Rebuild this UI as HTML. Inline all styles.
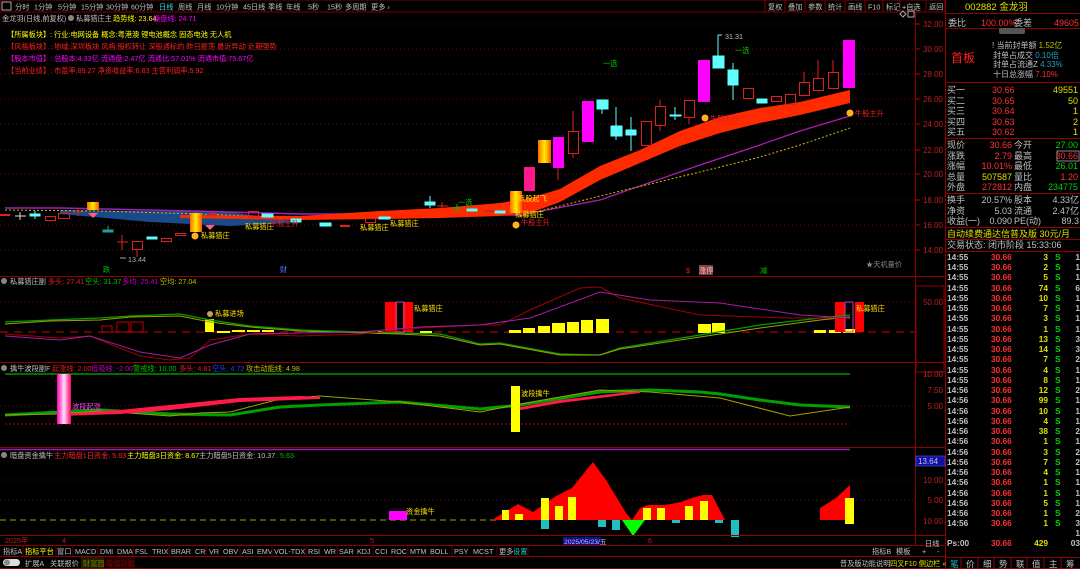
<!DOCTYPE html>
<html><head><meta charset="utf-8"><style>
html,body{margin:0;padding:0;background:#000;width:1080px;height:569px;overflow:hidden}
svg{display:block}
text{font-family:"Liberation Sans","Noto Sans CJK SC",sans-serif;font-size:7.2px}
.r9{font-size:9px}
.t8{font-size:8.3px}
</style></head><body>
<svg width="1080" height="569" viewBox="0 0 1080 569" xmlns="http://www.w3.org/2000/svg">
<defs>
<linearGradient id="og" x1="0" x2="1"><stop offset="0" stop-color="#ff6a00"/><stop offset=".5" stop-color="#ffee00"/><stop offset="1" stop-color="#ff5000"/></linearGradient>
<linearGradient id="pg" x1="0" x2="1"><stop offset="0" stop-color="#ff00aa"/><stop offset=".5" stop-color="#ffe0ff"/><stop offset="1" stop-color="#ff0066"/></linearGradient>
</defs>
<rect width="1080" height="569" fill="#000"/>
<!-- top toolbar -->
<rect x="0" y="0" width="945" height="12" fill="#000" stroke="#800000" stroke-width="1"/>
<rect x="2" y="2" width="9" height="8" fill="none" stroke="#aaa"/>
<g fill="#c0c0c0">
<text x="15" y="9.5">分时</text><text x="34" y="9.5">1分钟</text><text x="58" y="9.5">5分钟</text><text x="81" y="9.5">15分钟</text><text x="106" y="9.5">30分钟</text><text x="131" y="9.5">60分钟</text><text x="159" y="9.5" fill="#39d7d7">日线</text><text x="178" y="9.5">周线</text><text x="197" y="9.5">月线</text><text x="216" y="9.5">10分钟</text><text x="243" y="9.5">45日线</text><text x="268" y="9.5">季线</text><text x="286" y="9.5">年线</text><text x="308" y="9.5">5秒</text><text x="327" y="9.5">15秒</text><text x="345" y="9.5">多周期</text><text x="371" y="9.5">更多 ›</text>
<text x="768" y="9.5">复权</text><text x="788" y="9.5">叠加</text><text x="808" y="9.5">参数</text><text x="828" y="9.5">统计</text><text x="848" y="9.5">画线</text><text x="868" y="9.5">F10</text><text x="886" y="9.5">标记</text><text x="902" y="9.5">+自选</text><text x="929" y="9.5">返回</text>
</g>
<g stroke="#800000"><line x1="765" y1="0" x2="765" y2="12"/><line x1="785" y1="0" x2="785" y2="12"/><line x1="805" y1="0" x2="805" y2="12"/><line x1="825" y1="0" x2="825" y2="12"/><line x1="845" y1="0" x2="845" y2="12"/><line x1="865" y1="0" x2="865" y2="12"/><line x1="883" y1="0" x2="883" y2="12"/><line x1="900" y1="0" x2="900" y2="12"/><line x1="926" y1="0" x2="926" y2="12"/></g>
<!-- title -->
<text x="2" y="21" fill="#c0c0c0">金龙羽(日线,前复权)</text>
<circle cx="71" cy="18" r="3" fill="#888"/>
<text x="76" y="21" fill="#c0c0c0">私募猎庄主</text>
<text x="113" y="21" fill="#ffff00">趋势线: 23.64</text>
<text x="153" y="21" fill="#ff00ff">操盘线: 24.71</text>
<text x="7" y="37" fill="#ffff00">【所属板块】: 行业:电网设备 概念:粤港澳 锂电池概念 固态电池 无人机</text>
<text x="7" y="49" fill="#ff2020">【风格板块】: 地域:深圳板块 风格:股权转让 深股通标的 昨日振荡 最近异动 近期强势</text>
<text x="7" y="61" fill="#ff00ff">【股本市值】: 总股本:4.33亿 流通盘:2.47亿 流通比:57.01% 流通市值:75.67亿</text>
<text x="7" y="73" fill="#ff2020">【当前业绩】: 市盈率:89.27 净资收益率:6.83 主营利润率:5.92</text>
<!-- grid main -->
<g stroke="#7a0000" stroke-dasharray="1,3">
<line x1="0" y1="24" x2="915" y2="24"/><line x1="0" y1="49" x2="915" y2="49"/><line x1="0" y1="74" x2="915" y2="74"/><line x1="0" y1="99" x2="915" y2="99"/><line x1="0" y1="124" x2="915" y2="124"/><line x1="0" y1="150" x2="915" y2="150"/><line x1="0" y1="174" x2="915" y2="174"/><line x1="0" y1="200" x2="915" y2="200"/><line x1="0" y1="225" x2="915" y2="225"/><line x1="0" y1="250" x2="915" y2="250"/>
</g>
<!-- axis -->
<line x1="915.5" y1="12" x2="915.5" y2="545" stroke="#900000"/>
<line x1="945.5" y1="0" x2="945.5" y2="569" stroke="#900000"/>
<g fill="#c02020" text-anchor="end">
<text x="943" y="27" style="font-size:8px">32.00</text><text x="943" y="52" style="font-size:8px">30.00</text><text x="943" y="77" style="font-size:8px">28.00</text><text x="943" y="102" style="font-size:8px">26.00</text><text x="943" y="127" style="font-size:8px">24.00</text><text x="943" y="153" style="font-size:8px">22.00</text><text x="943" y="177" style="font-size:8px">20.00</text><text x="943" y="203" style="font-size:8px">18.00</text><text x="943" y="228" style="font-size:8px">16.00</text><text x="943" y="253" style="font-size:8px">14.00</text>
</g>
<g stroke="#c00000"><line x1="916" y1="24" x2="920" y2="24"/><line x1="916" y1="49" x2="920" y2="49"/><line x1="916" y1="74" x2="920" y2="74"/><line x1="916" y1="99" x2="920" y2="99"/><line x1="916" y1="124" x2="920" y2="124"/><line x1="916" y1="150" x2="920" y2="150"/><line x1="916" y1="174" x2="920" y2="174"/><line x1="916" y1="200" x2="920" y2="200"/><line x1="916" y1="225" x2="920" y2="225"/><line x1="916" y1="250" x2="920" y2="250"/></g>
<path d="M903 11 l3 3 -3 3 -3 -3z" fill="none" stroke="#aaa"/><rect x="908" y="11" width="6" height="6" fill="none" stroke="#aaa"/>
<!-- ribbons -->
<path d="M60 210 L230 212 L300 222 L230 226 L150 222 L60 214Z" fill="#1a4a8a"/>
<polyline points="5,208 60,208 150,210 230,212 300,214 380,214 440,215 520,215" fill="none" stroke="#a020c0" stroke-width="1.5"/>
<polyline points="5,210 100,211 200,214 300,218 380,218" fill="none" stroke="#c8c000" stroke-width="1" stroke-dasharray="2,2"/>
<path d="M180 215 L300 216 L380 211 L440 208 L500 203 L530 198 L560 189 L600 166 L640 150 L680 131 L720 117 L760 108 L800 102 L850 90 L850 103 L800 115 L760 123 L720 133 L680 146 L640 163 L600 180 L560 202 L530 213 L500 216 L440 218 L380 219 L300 220 L180 218Z" fill="#ff2a00"/>
<polyline points="520,215 600,200 700,165 760,145 800,131 850,116" fill="none" stroke="#b020b0" stroke-width="1.2"/>
<polyline points="520,216 600,196 700,172 760,157 800,145 850,128" fill="none" stroke="#c8c000" stroke-width="1" stroke-dasharray="2,2"/>
<!-- candles -->
<g stroke-width="1">
<g stroke="#e02020" fill="none">
<rect x="45.5" y="216.5" width="10" height="4"/><rect x="58.5" y="213.5" width="11" height="5"/><rect x="132.5" y="241.5" width="10" height="8"/><rect x="161.5" y="238.5" width="10" height="3"/><rect x="175.5" y="233.5" width="10" height="2"/><rect x="248.5" y="211.5" width="10" height="6"/><rect x="365.5" y="218.5" width="10" height="4"/>
<line x1="137" y1="249" x2="137" y2="257"/><line x1="122" y1="235" x2="122" y2="250"/><line x1="117" y1="242" x2="128" y2="242"/><line x1="78" y1="208" x2="78" y2="216"/><line x1="73" y1="212" x2="84" y2="212"/><line x1="442" y1="202" x2="442" y2="210"/><line x1="437" y1="206" x2="448" y2="206"/>
<rect x="568.5" y="131.5" width="10" height="22"/><line x1="573" y1="111" x2="573" y2="131"/><line x1="573" y1="153" x2="573" y2="158"/>
<rect x="641.5" y="121.5" width="10" height="24"/><rect x="655.5" y="106.5" width="10" height="19"/><line x1="660" y1="100" x2="660" y2="106"/><line x1="660" y1="125" x2="660" y2="131"/>
<rect x="684.5" y="100.5" width="10" height="17"/><line x1="689" y1="117" x2="689" y2="124"/>
<rect x="743.5" y="88.5" width="10" height="10"/><rect x="771.5" y="96.5" width="10" height="5"/><rect x="785.5" y="94.5" width="10" height="10"/><rect x="799.5" y="82.5" width="10" height="13"/><rect x="813.5" y="78.5" width="10" height="12"/><rect x="828.5" y="72.5" width="10" height="16"/>
<line x1="818" y1="60" x2="818" y2="78"/><line x1="833" y1="60" x2="833" y2="72"/><line x1="804" y1="72" x2="804" y2="82"/>
</g>
<rect x="0" y="214" width="10" height="2" fill="#e02020"/>
<rect x="340" y="225" width="10" height="2" fill="#e02020"/><rect x="485" y="210" width="10" height="2" fill="#e02020"/><rect x="209" y="213" width="8" height="2" fill="#e02020"/>
<g stroke="#60ffff" fill="#60ffff">
<line x1="35" y1="211" x2="35" y2="219"/><rect x="30" y="214" width="10" height="2"/>
<rect x="103" y="230" width="10" height="2" fill="#20a0a0" stroke="#20a0a0"/><line x1="108" y1="226" x2="108" y2="232" stroke="#20a0a0"/>
<rect x="147" y="237" width="10" height="2"/><rect x="262" y="214" width="11" height="3"/><rect x="291" y="219" width="10" height="3"/><rect x="320" y="223" width="11" height="3"/><rect x="379" y="217" width="11" height="2"/>
<rect x="425" y="202" width="10" height="3"/><line x1="430" y1="196" x2="430" y2="208"/><rect x="467" y="209" width="10" height="2"/><rect x="495" y="211" width="10" height="2"/>
<rect x="597" y="100" width="11" height="9"/><line x1="602" y1="109" x2="602" y2="114"/>
<rect x="611" y="126" width="11" height="10"/><line x1="616" y1="107" x2="616" y2="140"/>
<rect x="626" y="130" width="10" height="5"/><line x1="631" y1="117" x2="631" y2="151"/>
<rect x="670" y="115" width="11" height="1"/><line x1="675" y1="107" x2="675" y2="120"/>
<rect x="713" y="56" width="11" height="12"/><line x1="718" y1="35" x2="718" y2="56"/><line x1="718" y1="35" x2="722" y2="35"/>
<rect x="728" y="70" width="10" height="15"/><line x1="733" y1="63" x2="733" y2="100"/>
<rect x="757" y="99" width="10" height="4"/>
</g>
<line x1="20" y1="212" x2="20" y2="220" stroke="#ddd"/><line x1="15" y1="216" x2="26" y2="216" stroke="#ddd"/>
<line x1="457" y1="204" x2="457" y2="212" stroke="#00c000"/><line x1="452" y1="208" x2="462" y2="208" stroke="#00c000"/>
</g>
<rect x="87" y="202" width="12" height="8" fill="url(#og)"/>
<rect x="190" y="213" width="12" height="19" fill="url(#og)"/>
<rect x="510" y="191" width="12" height="22" fill="url(#og)"/>
<rect x="524" y="167" width="11" height="24" fill="#ff1a8c"/>
<rect x="538" y="140" width="13" height="23" fill="url(#og)"/>
<rect x="553" y="137" width="11" height="31" fill="#ff00ff"/><line x1="558" y1="168" x2="558" y2="180" stroke="#e02020"/>
<rect x="582" y="101" width="12" height="41" fill="#ff00ff"/>
<rect x="698" y="60" width="12" height="42" fill="#ff00ff"/>
<rect x="843" y="40" width="12" height="48" fill="#ff00ff"/>
<!-- labels main -->
<text x="725" y="39" fill="#c0c0c0">31.31</text>
<text x="603" y="66" fill="#00d000">一选</text><text x="735" y="53" fill="#00d000">一选</text><text x="458" y="205" fill="#00d000">一选</text>
<text x="128" y="262" fill="#aaa">13.44</text><line x1="120" y1="258" x2="126" y2="258" stroke="#aaa"/>
<circle cx="705" cy="118" r="3.5" fill="#ffb020"/><text x="710" y="121" fill="#e02020">牛股主升</text>
<circle cx="850" cy="113" r="3.5" fill="#ffb020"/><text x="855" y="116" fill="#e02020">牛股主升</text>
<circle cx="516" cy="225" r="3.5" fill="#ffb020"/><text x="521" y="225" fill="#e02020">牛股主升</text>
<text x="518" y="201" fill="#ffe000">妖股起飞</text><text x="515" y="217" fill="#ffe000">私募猎庄</text>
<circle cx="195" cy="236" r="3.5" fill="#ffb020"/><text x="201" y="238" fill="#ffe000">私募猎庄</text>
<path d="M88 213 h10 l-5 5z" fill="#ff6080"/><path d="M205 225 h10 l-5 5z" fill="#ff6080"/>
<text x="245" y="229" fill="#ffe000">私募猎庄</text><text x="270" y="226" fill="#e02020">牛股主升</text>
<text x="360" y="230" fill="#ffe000">私募猎庄</text><text x="390" y="226" fill="#ffe000">私募猎庄</text>
<text x="103" y="272" fill="#00c000">跌</text><text x="280" y="272" fill="#4080ff">财</text>
<text x="686" y="273" fill="#e02020">$</text><rect x="699" y="265" width="14" height="10" fill="#804040"/><text x="699" y="273" fill="#ffc0c0">涨停</text>
<text x="760" y="273" fill="#00c000">减</text>
<text x="866" y="267" fill="#888">★天机量价</text>
<!-- pane 2 -->
<line x1="0" y1="276.5" x2="945" y2="276.5" stroke="#900000"/>
<circle cx="4" cy="281" r="3" fill="#888"/>
<text x="10" y="284" fill="#c0c0c0">私募猎庄副</text><text x="48" y="284" fill="#e02020">多头: 27.41</text><text x="85" y="284" fill="#00c000">空头: 31.37</text><text x="122" y="284" fill="#c000c0">多均: 25.41</text><text x="160" y="284" fill="#c0c000">空均: 27.04</text>
<line x1="0" y1="302" x2="915" y2="302" stroke="#7a0000" stroke-dasharray="1,3"/>
<line x1="0" y1="332" x2="915" y2="332" stroke="#900000" stroke-width="1.5" stroke-dasharray="8,6"/>
<text x="943" y="305" fill="#c02020" text-anchor="end" style="font-size:8px">50.00</text>
<rect x="916" y="286" width="28" height="86" fill="none" stroke="#900000"/>
<g fill="none" stroke="#c00000"><rect x="102" y="326" width="10" height="6"/><rect x="117" y="322" width="12" height="10"/><rect x="131" y="322" width="12" height="10"/></g>
<g fill="#ffff00">
<rect x="205" y="319" width="9" height="13"/><rect x="217" y="331" width="13" height="2"/><rect x="232" y="330" width="13" height="2"/><rect x="247" y="330" width="13" height="2"/><rect x="262" y="330" width="12" height="2"/>
<rect x="509" y="330" width="12" height="3"/><rect x="523" y="328" width="12" height="5"/><rect x="538" y="326" width="12" height="7"/><rect x="552" y="323" width="13" height="10"/><rect x="567" y="322" width="12" height="11"/><rect x="581" y="320" width="12" height="13"/><rect x="596" y="319" width="13" height="14"/>
<rect x="698" y="324" width="13" height="9"/><rect x="712" y="323" width="13" height="10"/>
<rect x="814" y="330" width="12" height="3"/><rect x="829" y="330" width="12" height="3"/><rect x="843" y="329" width="12" height="4"/>
<rect x="378" y="331" width="8" height="2"/><rect x="420" y="331" width="12" height="2"/>
</g>
<rect x="385" y="302" width="12" height="30" fill="#ff0000"/><rect x="403" y="302" width="10" height="30" fill="#ff0000"/><rect x="396" y="302" width="8" height="30" fill="none" stroke="#c040c0"/>
<rect x="835" y="302" width="10" height="30" fill="#ff0000"/><rect x="855" y="302" width="9" height="30" fill="#ff0000"/><rect x="845" y="302" width="8" height="30" fill="none" stroke="#c040c0"/>
<text x="414" y="311" fill="#ffe000">私募猎庄</text><text x="856" y="311" fill="#ffe000">私募猎庄</text><text x="215" y="316" fill="#ffe000">私募进场</text>
<circle cx="210" cy="314" r="3" fill="#c0a060"/>
<polyline points="5,322 50,320 100,318 130,316 180,314 210,320 250,326 300,330 330,331 400,333 440,334 480,344 500,343 560,354 600,355 620,348 700,335 760,325 820,318 850,315" fill="none" stroke="#00a000" stroke-width="1.3"/>
<polyline points="5,324 50,321 100,320 130,317 180,316 210,322 250,327 300,331 330,332 400,334 440,336 480,345 500,344 560,355 600,355 620,349 700,337 760,328 820,320 850,317" fill="none" stroke="#a0a000" stroke-width="1"/>
<polyline points="5,334 60,338 90,336 140,356 170,360 190,358 210,340 250,334 300,336 360,334 420,328 480,325 500,325 530,310 580,288 600,287 620,298 700,315 790,318 850,318" fill="none" stroke="#a00000" stroke-width="1"/>
<polyline points="5,336 60,340 90,336 140,352 180,358 210,345 250,334 300,333 360,332 420,327 480,325 530,318 600,292 650,300 720,303 800,315 850,318" fill="none" stroke="#a020a0" stroke-width="1"/>
<!-- pane 3 -->
<line x1="0" y1="362.5" x2="945" y2="362.5" stroke="#900000"/>
<circle cx="4" cy="368" r="3" fill="#888"/>
<text x="10" y="371" fill="#c0c0c0">擒牛波段副F</text><text x="52" y="371" fill="#e02020">起涨线: 2.00</text><text x="91" y="371" fill="#c000c0">低吸线: -2.00</text><text x="133" y="371" fill="#00c000">警戒线: 10.00</text><text x="179" y="371" fill="#e02020">多头: 4.81</text><text x="212" y="371" fill="#2040ff">空头: 4.72</text><text x="246" y="371" fill="#c0c000">攻击动能线: 4.98</text>
<line x1="5" y1="374" x2="850" y2="374" stroke="#00b000" stroke-width="1.2"/>
<line x1="0" y1="406" x2="915" y2="406" stroke="#7a0000" stroke-dasharray="1,3"/>
<line x1="5" y1="424" x2="850" y2="424" stroke="#c00000" stroke-dasharray="2,2"/>
<g fill="#c02020" text-anchor="end"><text x="943" y="377" style="font-size:8px">10.00</text><text x="943" y="393" style="font-size:8px">7.50</text><text x="943" y="409" style="font-size:8px">5.00</text></g>
<polyline points="5,415 60,412 100,410 170,414 230,415 280,407 320,405 400,402 480,409 520,405 600,392 650,390 700,392 720,394 760,400 800,405 850,407" fill="none" stroke="#00a000" stroke-width="3"/>
<polyline points="5,415 60,414 100,411 170,416 200,413 230,412 280,399 320,396 400,402 480,412 520,404 600,390 650,392 720,398 790,416 850,407" fill="none" stroke="#a0a000" stroke-width="1"/>
<path d="M60 414 L120 410 L170 405 L240 398 L300 396 L320 397 L320 399 L240 402 L170 410 L120 414 L60 416Z" fill="#ff1a4a"/>
<path d="M515 408 L560 400 L620 393 L640 391 L640 393 L560 403 L515 411Z" fill="#ff1a4a"/>
<rect x="57" y="374" width="14" height="50" fill="url(#pg)"/>
<text x="72" y="409" fill="#ff40ff">波段起涨</text>
<rect x="511" y="386" width="9" height="46" fill="#ffff00"/>
<text x="521" y="396" fill="#ffe000">波段擒牛</text>
<!-- pane 4 -->
<line x1="0" y1="447.5" x2="945" y2="447.5" stroke="#900000"/>
<line x1="0" y1="449.5" x2="850" y2="449.5" stroke="#a020a0" stroke-width="1.5"/>
<circle cx="4" cy="455" r="3" fill="#888"/>
<text x="10" y="458" fill="#c0c0c0">暗盘资金擒牛</text><text x="54" y="458" fill="#ff2020">主力暗盘1日资金: 5.63</text><text x="127" y="458" fill="#ffff00">主力暗盘3日资金: 8.67</text><text x="199" y="458" fill="#c0c0c0">主力暗盘5日资金: 10.37</text><text x="276" y="458" fill="#00c000">: 5.63</text>
<rect x="916" y="456" width="29" height="10" fill="#1010a0" stroke="#6060ff" stroke-width=".5"/><text x="918" y="464" fill="#c0c0ff" style="font-size:8px">13.64</text>
<g stroke="#7a0000" stroke-dasharray="1,3"><line x1="0" y1="480" x2="915" y2="480" /><line x1="0" y1="500" x2="915" y2="500"/></g>
<g fill="#c02020" text-anchor="end"><text x="943" y="483" style="font-size:8px">10.00</text><text x="943" y="503" style="font-size:8px">5.00</text><text x="943" y="524" style="font-size:8px">10.00</text></g>
<line x1="0" y1="520" x2="500" y2="520" stroke="#a0a000" stroke-dasharray="6,4"/>
<path d="M492 520 L518 504 L533 512 L556 496 L572 488 L593 462 L606 480 L617 498 L626 513 L632 520Z" fill="#ff0000"/>
<path d="M632 520 L640 508 L648 505 L665 505 L681 502 L692 498 L703 495 L712 495 L725 520Z" fill="#ff0000"/>
<path d="M820 520 L820 508 L836 498 L850 485 L850 520Z" fill="#ff0000"/>
<g fill="#ffff00"><rect x="502" y="510" width="7" height="10"/><rect x="515" y="514" width="8" height="6"/><rect x="541" y="498" width="8" height="22"/><rect x="555" y="506" width="8" height="14"/><rect x="568" y="497" width="8" height="23"/><rect x="643" y="508" width="8" height="12"/><rect x="657" y="508" width="8" height="12"/><rect x="685" y="506" width="8" height="14"/><rect x="700" y="501" width="8" height="19"/><rect x="845" y="498" width="9" height="26"/></g>
<g fill="#20c0c0"><rect x="541" y="520" width="8" height="9"/><rect x="598" y="520" width="8" height="7"/><rect x="612" y="520" width="8" height="10"/><rect x="672" y="520" width="8" height="3"/><rect x="715" y="520" width="8" height="3"/><rect x="731" y="520" width="8" height="17"/></g>
<path d="M622 520 L645 520 L633 536Z" fill="#00ff00"/>
<rect x="389" y="511" width="18" height="9" fill="#ff00ff"/><text x="406" y="514" fill="#ffe000">资金擒牛</text>
<line x1="0" y1="535.5" x2="945" y2="535.5" stroke="#900000"/>
<!-- date axis -->
<g fill="#c02020"><text x="5" y="543">2025年</text><text x="62" y="543">4</text><text x="370" y="543">5</text><text x="648" y="543">6</text></g>
<rect x="563" y="537" width="38" height="8" fill="#10108a"/><text x="564" y="544" fill="#c0c0ff" style="font-size:6.8px">2025/05/23/五</text>
<!-- bottom toolbar -->
<line x1="0" y1="545.5" x2="945" y2="545.5" stroke="#900000"/>
<line x1="0" y1="556.5" x2="945" y2="556.5" stroke="#900000"/>
<line x1="0" y1="568.5" x2="1080" y2="568.5" stroke="#900000"/>
<g fill="#c0c0c0">
<text x="3" y="554">指标A</text><text x="25" y="554" fill="#ffff00">指标平台</text><text x="57" y="554">窗口</text><text x="75" y="554">MACD</text><text x="100" y="554">DMI</text><text x="117" y="554">DMA</text><text x="135" y="554">FSL</text><text x="152" y="554">TRIX</text><text x="171" y="554">BRAR</text><text x="195" y="554">CR</text><text x="209" y="554">VR</text><text x="223" y="554">OBV</text><text x="242" y="554">ASI</text><text x="257" y="554">EMV</text><text x="274" y="554">VOL-TDX</text><text x="308" y="554">RSI</text><text x="324" y="554">WR</text><text x="339" y="554">SAR</text><text x="357" y="554">KDJ</text><text x="375" y="554">CCI</text><text x="391" y="554">ROC</text><text x="410" y="554">MTM</text><text x="430" y="554">BOLL</text><text x="454" y="554">PSY</text><text x="473" y="554">MCST</text><text x="499" y="554">更多</text><text x="513" y="554" fill="#20c0c0">设置</text>
<text x="25" y="566">扩展A</text><text x="50" y="566">关联报价</text><text x="83" y="566" fill="#e0e000">财富园</text><text x="106" y="566" fill="#ff2020">增值功能</text>
<text x="872" y="554">指标B</text><text x="896" y="554">模板</text><text x="922" y="554">+</text><text x="937" y="554">-</text>
<text x="840" y="566">普及版功能说明</text><text x="890" y="566" fill="#e0e000">四叉F10 侧边栏 «</text>
</g>
<g stroke="#600000"><line x1="23" y1="546" x2="23" y2="556"/><line x1="56" y1="546" x2="56" y2="556"/><line x1="73" y1="546" x2="73" y2="556"/><line x1="98" y1="546" x2="98" y2="556"/><line x1="133" y1="546" x2="133" y2="556"/><line x1="169" y1="546" x2="169" y2="556"/><line x1="206" y1="546" x2="206" y2="556"/><line x1="240" y1="546" x2="240" y2="556"/><line x1="272" y1="546" x2="272" y2="556"/><line x1="306" y1="546" x2="306" y2="556"/><line x1="337" y1="546" x2="337" y2="556"/><line x1="373" y1="546" x2="373" y2="556"/><line x1="408" y1="546" x2="408" y2="556"/><line x1="452" y1="546" x2="452" y2="556"/><line x1="497" y1="546" x2="497" y2="556"/><line x1="528" y1="546" x2="528" y2="556"/></g>
<rect x="3" y="559" width="17" height="7" rx="3.5" fill="#ddd"/><circle cx="7" cy="562.5" r="3" fill="#888"/>
<rect x="81" y="557" width="23" height="11" fill="#303000" opacity=".6"/><rect x="104" y="557" width="31" height="11" fill="#300000" opacity=".7"/>
<!-- right panel -->
<text x="965" y="10" fill="#e0e000" style="font-size:9.5px">002882 金龙羽</text>
<line x1="946" y1="13.5" x2="1080" y2="13.5" stroke="#900000"/>
<text x="948" y="26" fill="#c0c0c0" class="r9">委比</text><text x="981" y="26" fill="#ff3030" class="r9">100.00%</text><text x="1014" y="26" fill="#c0c0c0" class="r9">委差</text><text x="1079" y="26" fill="#ff3030" text-anchor="end" class="r9">49605</text>
<line x1="946" y1="28.5" x2="1080" y2="28.5" stroke="#900000"/>
<rect x="999" y="28" width="26" height="6" rx="2" fill="#555"/>
<text x="951" y="62" fill="#ff2020" style="font-size:12px">首板</text>
<text x="992" y="48" fill="#c0c0c0" style="font-size:8px">! 当前封单额 <tspan fill="#c0c000">1.52亿</tspan></text>
<text x="993" y="58" fill="#c0c0c0" style="font-size:8px">封单占成交 <tspan fill="#20a0c0">0.10倍</tspan></text>
<text x="993" y="67" fill="#c0c0c0" style="font-size:8px">封单占流通Z <tspan fill="#20a0c0">4.33%</tspan></text>
<text x="993" y="77" fill="#c0c0c0" style="font-size:8px">十日总涨幅 <tspan fill="#ff3030">7.10%</tspan></text>
<line x1="946" y1="82.5" x2="1080" y2="82.5" stroke="#900000"/>
<g fill="#c0c0c0"><text x="947" y="93" class="r9">买一</text><text x="947" y="104" class="r9">买二</text><text x="947" y="114" class="r9">买三</text><text x="947" y="125" class="r9">买四</text><text x="947" y="135" class="r9">买五</text></g>
<g fill="#ff3030"><text x="992" y="93" class="r9">30.66</text><text x="992" y="104" class="r9">30.65</text><text x="992" y="114" class="r9">30.64</text><text x="992" y="125" class="r9">30.63</text><text x="992" y="135" class="r9">30.62</text></g>
<g fill="#e0e000" text-anchor="end"><text x="1078" y="93" class="r9">49551</text><text x="1078" y="104" class="r9">50</text><text x="1078" y="114" class="r9">1</text><text x="1078" y="125" class="r9">2</text><text x="1078" y="135" class="r9">1</text></g>
<line x1="946" y1="138.5" x2="1080" y2="138.5" stroke="#900000"/>
<g fill="#c0c0c0"><text x="947" y="148" class="r9">现价</text><text x="947" y="159" class="r9">涨跌</text><text x="947" y="169" class="r9">涨幅</text><text x="947" y="180" class="r9">总量</text><text x="947" y="190" class="r9">外盘</text>
<text x="1014" y="148" class="r9">今开</text><text x="1014" y="159" class="r9">最高</text><text x="1014" y="169" class="r9">最低</text><text x="1014" y="180" class="r9">量比</text><text x="1014" y="190" class="r9">内盘</text></g>
<g text-anchor="end"><text x="1012" y="148" fill="#ff3030" class="r9">30.66</text><text x="1012" y="159" fill="#ff3030" class="r9">2.79</text><text x="1012" y="169" fill="#ff3030" class="r9">10.01%</text><text x="1012" y="180" fill="#e0e000" class="r9">507587</text><text x="1012" y="190" fill="#ff3030" class="r9">272812</text>
<text x="1078" y="148" fill="#00d000" class="r9">27.00</text><text x="1078" y="159" fill="#ff3030" class="r9">30.66</text><text x="1078" y="169" fill="#00d000" class="r9">26.01</text><text x="1078" y="180" fill="#ff3030" class="r9">1.20</text><text x="1078" y="190" fill="#00d000" class="r9">234775</text></g>
<rect x="1057" y="151" width="22" height="10" fill="none" stroke="#888"/>
<line x1="946" y1="193.5" x2="1080" y2="193.5" stroke="#900000"/>
<g fill="#c0c0c0">
<text x="947" y="203" class="r9">换手</text><text x="947" y="214" class="r9">净资</text><text x="947" y="224" class="r9">收益(一)</text>
<text x="1014" y="203" class="r9">股本</text><text x="1014" y="214" class="r9">流通</text><text x="1014" y="224" class="r9">PE(动)</text>
<g text-anchor="end"><text x="1012" y="203" class="r9">20.57%</text><text x="1012" y="214" class="r9">5.03</text><text x="1012" y="224" class="r9">0.090</text><text x="1079" y="203" class="r9">4.33亿</text><text x="1079" y="214" class="r9">2.47亿</text><text x="1079" y="224" class="r9">89.3</text></g>
</g>
<line x1="946" y1="227.5" x2="1080" y2="227.5" stroke="#900000"/>
<text x="947" y="237" fill="#e0e000" class="r9">自动续费通达信普及版  30元/月</text>
<line x1="946" y1="239.5" x2="1080" y2="239.5" stroke="#900000"/>
<text x="947" y="248" fill="#c0c0c0" class="r9">交易状态: 闭市阶段  15:33:06</text>
<line x1="946" y1="251.5" x2="1080" y2="251.5" stroke="#900000"/>
<g font-weight="bold">
<g fill="#c0c0c0">
<text x="947" y="260" class="t8">14:55</text><text x="947" y="270" class="t8">14:55</text><text x="947" y="280" class="t8">14:55</text><text x="947" y="291" class="t8">14:55</text><text x="947" y="301" class="t8">14:55</text><text x="947" y="311" class="t8">14:55</text><text x="947" y="321" class="t8">14:55</text><text x="947" y="332" class="t8">14:55</text><text x="947" y="342" class="t8">14:55</text><text x="947" y="352" class="t8">14:55</text><text x="947" y="362" class="t8">14:55</text><text x="947" y="373" class="t8">14:55</text><text x="947" y="383" class="t8">14:55</text><text x="947" y="393" class="t8">14:56</text><text x="947" y="403" class="t8">14:56</text><text x="947" y="414" class="t8">14:56</text><text x="947" y="424" class="t8">14:56</text><text x="947" y="434" class="t8">14:56</text><text x="947" y="444" class="t8">14:56</text><text x="947" y="455" class="t8">14:56</text><text x="947" y="465" class="t8">14:56</text><text x="947" y="475" class="t8">14:56</text><text x="947" y="485" class="t8">14:56</text><text x="947" y="496" class="t8">14:56</text><text x="947" y="506" class="t8">14:56</text><text x="947" y="516" class="t8">14:56</text><text x="947" y="526" class="t8">14:56</text>
</g>
<g fill="#ff3030">
<text x="991" y="260" class="t8">30.66</text><text x="991" y="270" class="t8">30.66</text><text x="991" y="280" class="t8">30.66</text><text x="991" y="291" class="t8">30.66</text><text x="991" y="301" class="t8">30.66</text><text x="991" y="311" class="t8">30.66</text><text x="991" y="321" class="t8">30.66</text><text x="991" y="332" class="t8">30.66</text><text x="991" y="342" class="t8">30.66</text><text x="991" y="352" class="t8">30.66</text><text x="991" y="362" class="t8">30.66</text><text x="991" y="373" class="t8">30.66</text><text x="991" y="383" class="t8">30.66</text><text x="991" y="393" class="t8">30.66</text><text x="991" y="403" class="t8">30.66</text><text x="991" y="414" class="t8">30.66</text><text x="991" y="424" class="t8">30.66</text><text x="991" y="434" class="t8">30.66</text><text x="991" y="444" class="t8">30.66</text><text x="991" y="455" class="t8">30.66</text><text x="991" y="465" class="t8">30.66</text><text x="991" y="475" class="t8">30.66</text><text x="991" y="485" class="t8">30.66</text><text x="991" y="496" class="t8">30.66</text><text x="991" y="506" class="t8">30.66</text><text x="991" y="516" class="t8">30.66</text><text x="991" y="526" class="t8">30.66</text><text x="991" y="546" class="t8">30.66</text>
</g>
<g fill="#e0e000" text-anchor="end">
<text x="1048" y="260" class="t8">3</text><text x="1048" y="270" class="t8">2</text><text x="1048" y="280" class="t8">5</text><text x="1048" y="291" class="t8">74</text><text x="1048" y="301" class="t8">10</text><text x="1048" y="311" class="t8">7</text><text x="1048" y="321" class="t8">3</text><text x="1048" y="332" class="t8">1</text><text x="1048" y="342" class="t8">13</text><text x="1048" y="352" class="t8">14</text><text x="1048" y="362" class="t8">7</text><text x="1048" y="373" class="t8">4</text><text x="1048" y="383" class="t8">8</text><text x="1048" y="393" class="t8">12</text><text x="1048" y="403" class="t8">99</text><text x="1048" y="414" class="t8">10</text><text x="1048" y="424" class="t8">4</text><text x="1048" y="434" class="t8">38</text><text x="1048" y="444" class="t8">1</text><text x="1048" y="455" class="t8">3</text><text x="1048" y="465" class="t8">7</text><text x="1048" y="475" class="t8">4</text><text x="1048" y="485" class="t8">1</text><text x="1048" y="496" class="t8">1</text><text x="1048" y="506" class="t8">5</text><text x="1048" y="516" class="t8">1</text><text x="1048" y="526" class="t8">1</text><text x="1048" y="546" class="t8">429</text>
</g>
<g fill="#00d000">
<text x="1055" y="260" class="t8">S</text><text x="1055" y="270" class="t8">S</text><text x="1055" y="280" class="t8">S</text><text x="1055" y="291" class="t8">S</text><text x="1055" y="301" class="t8">S</text><text x="1055" y="311" class="t8">S</text><text x="1055" y="321" class="t8">S</text><text x="1055" y="332" class="t8">S</text><text x="1055" y="342" class="t8">S</text><text x="1055" y="352" class="t8">S</text><text x="1055" y="362" class="t8">S</text><text x="1055" y="373" class="t8">S</text><text x="1055" y="383" class="t8">S</text><text x="1055" y="393" class="t8">S</text><text x="1055" y="403" class="t8">S</text><text x="1055" y="414" class="t8">S</text><text x="1055" y="424" class="t8">S</text><text x="1055" y="434" class="t8">S</text><text x="1055" y="444" class="t8">S</text><text x="1055" y="455" class="t8">S</text><text x="1055" y="465" class="t8">S</text><text x="1055" y="475" class="t8">S</text><text x="1055" y="485" class="t8">S</text><text x="1055" y="496" class="t8">S</text><text x="1055" y="506" class="t8">S</text><text x="1055" y="516" class="t8">S</text><text x="1055" y="526" class="t8">S</text>
</g>
<g fill="#c0c0c0" text-anchor="end">
<text x="1080" y="260" class="t8">1</text><text x="1080" y="270" class="t8">1</text><text x="1080" y="280" class="t8">1</text><text x="1080" y="291" class="t8">6</text><text x="1080" y="301" class="t8">1</text><text x="1080" y="311" class="t8">1</text><text x="1080" y="321" class="t8">1</text><text x="1080" y="332" class="t8">1</text><text x="1080" y="342" class="t8">3</text><text x="1080" y="352" class="t8">3</text><text x="1080" y="362" class="t8">2</text><text x="1080" y="373" class="t8">1</text><text x="1080" y="383" class="t8">1</text><text x="1080" y="393" class="t8">2</text><text x="1080" y="403" class="t8">1</text><text x="1080" y="414" class="t8">1</text><text x="1080" y="424" class="t8">1</text><text x="1080" y="434" class="t8">2</text><text x="1080" y="444" class="t8">1</text><text x="1080" y="455" class="t8">2</text><text x="1080" y="465" class="t8">2</text><text x="1080" y="475" class="t8">1</text><text x="1080" y="485" class="t8">1</text><text x="1080" y="496" class="t8">1</text><text x="1080" y="506" class="t8">1</text><text x="1080" y="516" class="t8">2</text><text x="1080" y="526" class="t8">3</text><text x="1080" y="536" class="t8">1</text><text x="1080" y="546" class="t8">03</text>
</g>
<text x="947" y="546" fill="#c0c0c0" class="t8">Ps:00</text>
</g>
<text x="925" y="546" fill="#c0c0c0">日线</text>
<line x1="946" y1="557.5" x2="1080" y2="557.5" stroke="#900000"/>
<g fill="#c0c0c0"><text x="950" y="567" fill="#20c0c0" style="font-size:8.5px">笔</text><text x="966" y="567" style="font-size:8.5px">价</text><text x="983" y="567" style="font-size:8.5px">细</text><text x="999" y="567" style="font-size:8.5px">势</text><text x="1016" y="567" style="font-size:8.5px">联</text><text x="1032" y="567" style="font-size:8.5px">值</text><text x="1049" y="567" style="font-size:8.5px">主</text><text x="1066" y="567" style="font-size:8.5px">筹</text></g>
<g stroke="#900000"><line x1="961" y1="558" x2="961" y2="569"/><line x1="978" y1="558" x2="978" y2="569"/><line x1="994" y1="558" x2="994" y2="569"/><line x1="1011" y1="558" x2="1011" y2="569"/><line x1="1027" y1="558" x2="1027" y2="569"/><line x1="1044" y1="558" x2="1044" y2="569"/><line x1="1061" y1="558" x2="1061" y2="569"/></g>
</svg>
</body></html>
